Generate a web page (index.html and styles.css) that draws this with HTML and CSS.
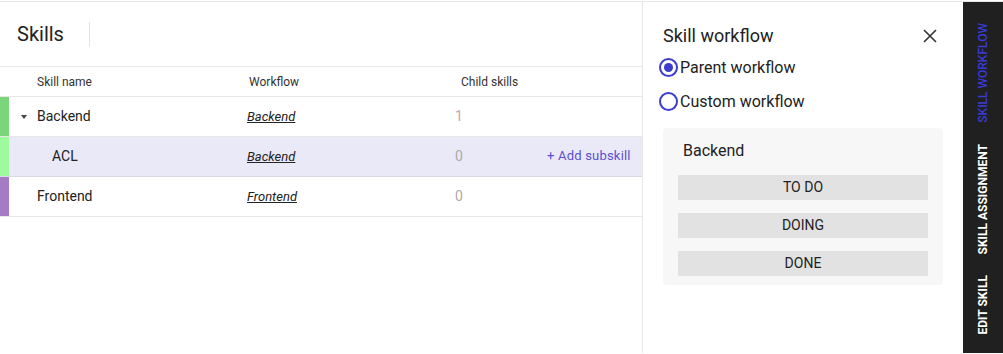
FILE: index.html
```html
<!DOCTYPE html>
<html lang="en">

<head>
  <meta charset="UTF-8">
  <meta name="viewport" content="width=device-width, initial-scale=1.0">
  <title>Skills</title>
  <link rel="stylesheet" href="styles.css">
</head>

<body>
  <div class="app">
    <div class="main">
      <div class="header">
        <h1>Skills</h1>
        <div class="divider"></div>
      </div>
      <div class="row head">
        <div class="name">Skill name</div>
        <div class="flow">Workflow</div>
        <div class="child">Child skills</div>
      </div>
      <div class="row">
        <div class="bar green"></div>
        <div class="name"><span class="caret"></span>Backend</div>
        <div class="flow"><a href="#">Backend</a></div>
        <div class="child one">1</div>
      </div>
      <div class="row active">
        <div class="bar lime"></div>
        <div class="name sub">ACL</div>
        <div class="flow"><a href="#">Backend</a></div>
        <div class="child">0</div>
        <div class="add">+ Add subskill</div>
      </div>
      <div class="row">
        <div class="bar purple"></div>
        <div class="name">Frontend</div>
        <div class="flow"><a href="#">Frontend</a></div>
        <div class="child">0</div>
      </div>
    </div>

    <div class="panel">
      <div class="panel-top">
        <h2>Skill workflow</h2>
        <svg class="close" width="14" height="14" viewBox="0 0 14 14">
          <path d="M1 1L13 13M13 1L1 13" stroke="#333" stroke-width="1.6" />
        </svg>
      </div>
      <label class="radio"><span class="circle checked"></span>Parent workflow</label>
      <label class="radio"><span class="circle"></span>Custom workflow</label>
      <div class="box">
        <div class="box-title">Backend</div>
        <div class="state">TO DO</div>
        <div class="state">DOING</div>
        <div class="state">DONE</div>
      </div>
    </div>

    <div class="side">
      <span class="tab current">SKILL WORKFLOW</span>
      <span class="tab">SKILL ASSIGNMENT</span>
      <span class="tab">EDIT SKILL</span>
    </div>
  </div>
</body>

</html>
```

FILE: styles.css
```css
body,html{
  height:100%;
}
body {
  margin: 0;
  padding: 0;
  font-family: 'Roboto', sans-serif;
  color: #222;
  background-color: #fff;
}

.app {
  display: flex;
  height: 351px;
  margin-top: 1px;
  border-top: 1px solid #e6e6e6;
}

.main {
  width: 642px;
  border-right: 1px solid #e6e6e6;
}

.header {
  display: flex;
  align-items: center;
  padding-left: 17px;
  border-bottom: 1px solid #e6e6e6;
  box-sizing: border-box;
  height: 65px;
}

h1 {
  margin: 0;
  font-size: 20px;
  font-weight: 400;
  color: #222;
}

.divider {
  width: 1px;
  height: 24px;
  background-color: #e2e2e2;
  margin-left: 25px;
}

.row {
  display: flex;
  align-items: center;
  height: 39px;
  border-bottom: 1px solid #e6e6e6;
  font-size: 14px;
  position: relative;
}

.row > div {
  margin-top: -2px;
}

.row.head {
  height: 29px;
  font-size: 12px;
  color: #333;
}

.row.head > div {
  margin-top: 0;
}

.row.active {
  background-color: #eae9f7;
  border-bottom-color: #d9d8e6;
}

.row > .bar {
  position: absolute;
  left: 0;
  top: 0;
  bottom: 0;
  width: 9px;
  margin-top: 0;
}

.green { background-color: #79d67a; }
.lime { background-color: #9dfb9d; }
.purple { background-color: #a57cc3; }

.name {
  width: 210px;
  padding-left: 37px;
  position: relative;
}

.name.sub {
  padding-left: 52px;
  width: 195px;
}

.caret {
  position: absolute;
  left: 21px;
  top: 7px;
  border-left: 3px solid transparent;
  border-right: 3px solid transparent;
  border-top: 4px solid #444;
}

.flow {
  width: 208px;
}

.head .flow {
  padding-left: 2px;
  width: 210px;
}

.head .child {
  padding-left: 2px;
  color: #333;
}

.flow a {
  color: #222;
  font-style: italic;
  font-size: 13px;
}

.child {
  width: 92px;
  color: #aaa;
}

.child.one {
  color: #c3a6a6;
}

.add {
  color: #5b50cf;
  font-size: 13px;
  letter-spacing: 0.2px;
}

.panel {
  width: 320px;
  padding: 0 20px;
  box-sizing: border-box;
}

.panel-top {
  display: flex;
  align-items: center;
  justify-content: space-between;
  padding-top: 23px;
  padding-right: 6px;
}

h2 {
  margin: 0;
  font-size: 18px;
  font-weight: 400;
  color: #222;
}

.radio {
  display: flex;
  align-items: center;
  font-size: 16px;
  margin-left: -4px;
  height: 34px;
}

.radio:first-of-type {
  margin-top: 4px;
}

.circle {
  width: 15px;
  height: 15px;
  border: 2px solid #3c3ccf;
  border-radius: 50%;
  margin-right: 2px;
  position: relative;
}

.circle.checked::after {
  content: "";
  position: absolute;
  left: 3px;
  top: 3px;
  width: 9px;
  height: 9px;
  border-radius: 50%;
  background-color: #3c3ccf;
}

.box {
  margin-top: 10px;
  background-color: #f7f7f7;
  border-radius: 4px;
  padding: 13px 15px 9px;
}

.box-title {
  font-size: 16px;
  padding-left: 5px;
  margin-bottom: 15px;
}

.state {
  height: 25px;
  line-height: 25px;
  background-color: #e2e2e2;
  text-align: center;
  font-size: 14px;
  color: #222;
  margin-bottom: 13px;
}

.state:last-child {
  margin-bottom: 0;
}

.side {
  width: 40px;
  background-color: #202020;
  display: flex;
  flex-direction: column;
  align-items: center;
  padding-top: 21px;
  gap: 21px;
}

.tab {
  writing-mode: vertical-rl;
  transform: rotate(180deg);
  font-size: 12px;
  font-weight: 700;
  color: #fff;
}

.tab.current {
  color: #3a3ad6;
  font-weight: 500;
}
```
